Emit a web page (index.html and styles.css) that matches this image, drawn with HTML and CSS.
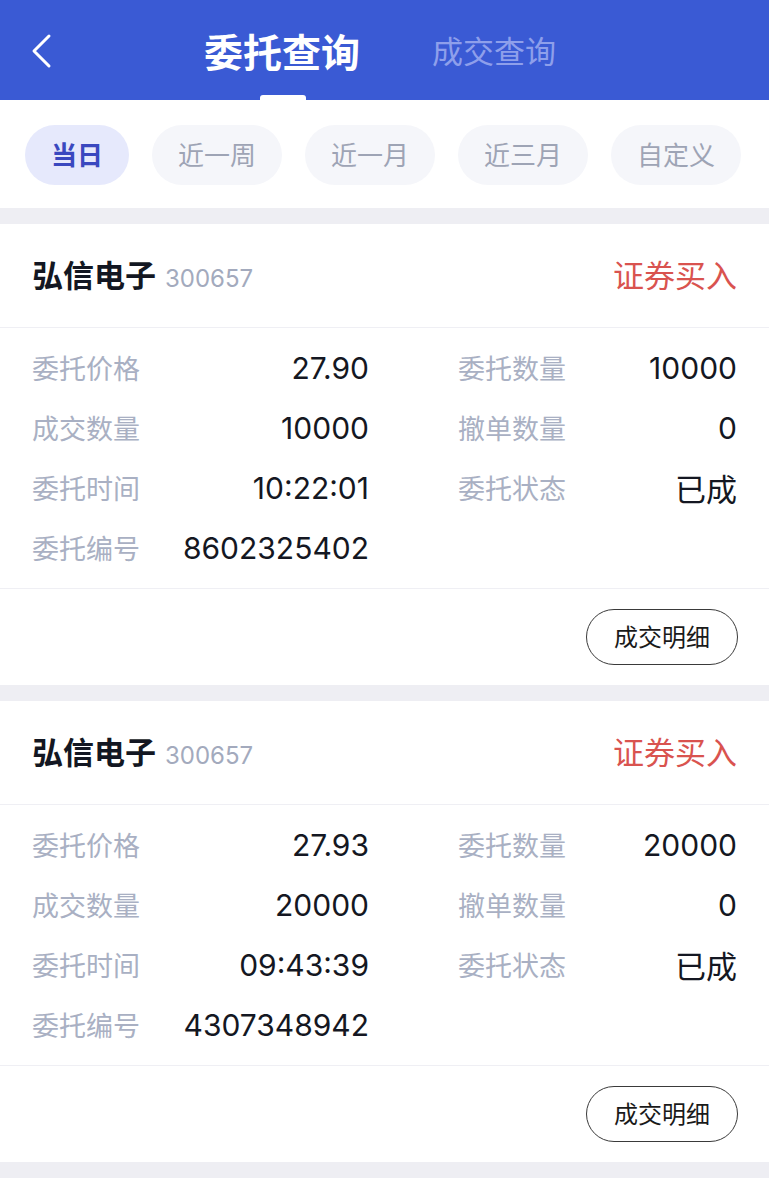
FILE: index.html
```html
<!DOCTYPE html>
<html lang="zh-CN">
<head>
    <meta charset="UTF-8">
    <meta name="viewport" content="width=device-width, initial-scale=1.0">
    <title>委托查询</title>
    <link rel="stylesheet" href="styles.css">
</head>
<body>

<div class="header">
    <a class="back" href="#">
        <svg width="24" height="36" viewBox="0 0 24 36">
            <polyline points="19,3 4,18 19,33" fill="none" stroke="#ffffff" stroke-width="3" stroke-linecap="round" stroke-linejoin="round"/>
        </svg>
    </a>
    <div class="tabs">
        <span class="tab active">委托查询</span>
        <span class="tab">成交查询</span>
    </div>
</div>

<div class="filter">
    <span class="pill active">当日</span>
    <span class="pill">近一周</span>
    <span class="pill">近一月</span>
    <span class="pill">近三月</span>
    <span class="pill">自定义</span>
</div>

<div class="card">
    <div class="card-head">
        <div class="stock">弘信电子<span class="code">300657</span></div>
        <div class="side">证券买入</div>
    </div>
    <div class="card-body">
        <div class="cell"><span class="label">委托价格</span><span class="value">27.90</span></div>
        <div class="cell"><span class="label">委托数量</span><span class="value">10000</span></div>
        <div class="cell"><span class="label">成交数量</span><span class="value">10000</span></div>
        <div class="cell"><span class="label">撤单数量</span><span class="value">0</span></div>
        <div class="cell"><span class="label">委托时间</span><span class="value">10:22:01</span></div>
        <div class="cell"><span class="label">委托状态</span><span class="value cn">已成</span></div>
        <div class="cell"><span class="label">委托编号</span><span class="value">8602325402</span></div>
    </div>
    <div class="card-foot">
        <button class="btn-detail">成交明细</button>
    </div>
</div>

<div class="card">
    <div class="card-head">
        <div class="stock">弘信电子<span class="code">300657</span></div>
        <div class="side">证券买入</div>
    </div>
    <div class="card-body">
        <div class="cell"><span class="label">委托价格</span><span class="value">27.93</span></div>
        <div class="cell"><span class="label">委托数量</span><span class="value">20000</span></div>
        <div class="cell"><span class="label">成交数量</span><span class="value">20000</span></div>
        <div class="cell"><span class="label">撤单数量</span><span class="value">0</span></div>
        <div class="cell"><span class="label">委托时间</span><span class="value">09:43:39</span></div>
        <div class="cell"><span class="label">委托状态</span><span class="value cn">已成</span></div>
        <div class="cell"><span class="label">委托编号</span><span class="value">4307348942</span></div>
    </div>
    <div class="card-foot">
        <button class="btn-detail">成交明细</button>
    </div>
</div>

</body>
</html>
```

FILE: styles.css
```css
body {
    margin: 0;
    background-color: #eeeef3;
    font-family: "Noto Sans CJK SC", sans-serif;
}
.header {
    height: 100px;
    background-color: #3a5ad4;
    display: flex;
    align-items: center;
}
.back {
    display: flex;
    width: 24px;
    margin-left: 30px;
    margin-top: 2px;
}
.tabs {
    display: flex;
    align-items: center;
    margin-left: 150px;
    gap: 72px;
}
.tab {
    position: relative;
    font-size: 31px;
    line-height: 100px;
    color: #8e9feb;
}
.tab.active {
    font-size: 39px;
    font-weight: bold;
    color: #ffffff;
}
.tab.active::after {
    content: "";
    position: absolute;
    left: 56px;
    bottom: 0;
    width: 46px;
    height: 5px;
    background-color: #ffffff;
    border-radius: 3px 3px 0 0;
}
.filter {
    height: 108px;
    background-color: #ffffff;
    display: flex;
    align-items: flex-start;
    gap: 23px;
    padding: 25px 0 0 25px;
    box-sizing: border-box;
}
.pill {
    height: 60px;
    line-height: 58px;
    padding: 0 26px;
    border-radius: 30px;
    background-color: #f5f6fa;
    color: #9ea4b5;
    font-size: 26px;
}
.pill.active {
    background-color: #e6e9fc;
    color: #3a48bf;
    font-weight: bold;
}
.card {
    margin-top: 16px;
    background-color: #ffffff;
}
.card-head {
    height: 104px;
    display: flex;
    align-items: center;
    justify-content: space-between;
    padding: 0 32px 4px;
    box-sizing: border-box;
    border-bottom: 1px solid #efeff4;
}
.stock {
    font-size: 31px;
    font-weight: bold;
    color: #131722;
    display: flex;
    align-items: baseline;
}
.code {
    font-family: Inter, "Liberation Sans", sans-serif;
    font-weight: normal;
    font-size: 24px;
    color: #a3aabd;
    margin-left: 9px;
}
.side {
    font-size: 31px;
    color: #d9534f;
}
.card-body {
    display: grid;
    grid-template-columns: 337px 1fr;
    column-gap: 89px;
    padding: 10px 32px;
    border-bottom: 1px solid #efeff4;
}
.cell {
    height: 60px;
    display: flex;
    align-items: center;
    justify-content: space-between;
    padding-bottom: 1px;
    box-sizing: border-box;
}
.label {
    font-size: 27px;
    color: #a9b0c3;
}
.value {
    font-family: Inter, "Liberation Sans", sans-serif;
    font-size: 30px;
    color: #141722;
}
.value.cn {
    font-family: "Noto Sans CJK SC", sans-serif;
    font-size: 31px;
}
.card-foot {
    display: flex;
    justify-content: flex-end;
    padding: 20px 31px 20px 0;
}
.btn-detail {
    width: 152px;
    height: 56px;
    border: 1px solid #3a3a3a;
    border-radius: 28px;
    background-color: #ffffff;
    font-family: "Noto Sans CJK SC", sans-serif;
    font-size: 24px;
    line-height: 52px;
    color: #1a1a1a;
    padding: 0 0 2px;
}
```
